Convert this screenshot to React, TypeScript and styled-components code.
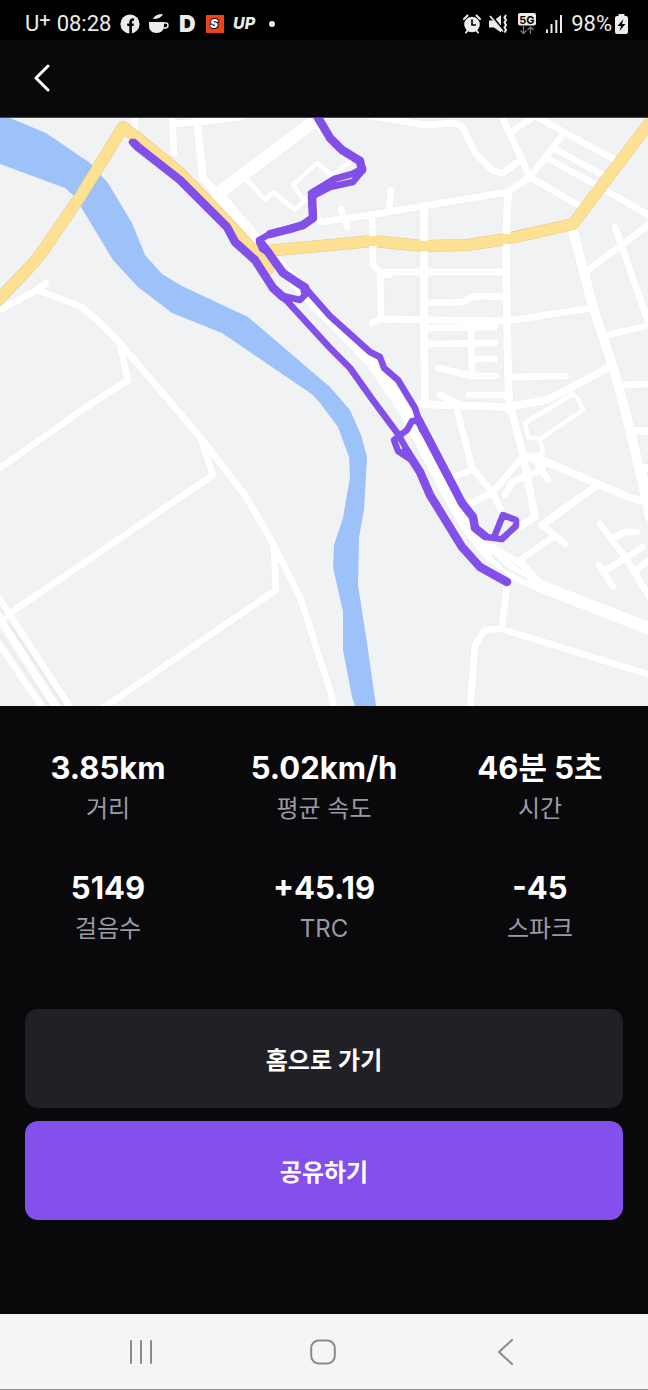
import React from "react";
import styled, { createGlobalStyle } from "styled-components";

const GlobalStyle = createGlobalStyle`
  * { box-sizing: border-box; }
  body { margin: 0; background: #09090b; }
`;

const Page = styled.div`
  display: flex;
  flex-direction: column;
  min-height: 100vh;
  background: #09090b;
  color: #fff;
  font-family: Inter, "Noto Sans CJK KR", sans-serif;
`;

const StatusBar = styled.div`
  display: flex;
  align-items: center;
  justify-content: space-between;
  height: 40px;
  padding: 8px 20px 0 25px;
  background: #000;
  color: #ececec;
  font-family: Roboto, sans-serif;
  font-size: 22px;
  line-height: 32px;
`;

const StatusGroup = styled.div<{ $gap: number }>`
  display: flex;
  align-items: center;
  gap: ${(p) => p.$gap}px;

  svg { display: block; flex: none; }
`;

const Carrier = styled.span`
  display: flex;
`;

const CarrierPlus = styled.span`
  font-size: 20px;
  line-height: 24px;
`;

const Header = styled.header`
  display: flex;
  align-items: center;
  height: 78px;
  padding: 0 22px;
  border-bottom: 1px solid #4b454c;
`;

const IconButton = styled.button`
  display: flex;
  align-items: center;
  justify-content: center;
  width: 40px;
  height: 40px;
  padding: 0;
  border: 0;
  background: none;
  cursor: pointer;
`;

const MapDrawing = styled.svg`
  display: block;
  width: 100%;
  height: auto;
  background: #f0f2f4;
`;

const Stats = styled.dl`
  display: grid;
  grid-template-columns: repeat(3, 1fr);
  row-gap: 38px;
  margin: 0;
  padding: 41px 0 60px;
`;

const Stat = styled.div`
  display: flex;
  flex-direction: column-reverse;
  align-items: center;
`;

const StatValue = styled.dd`
  margin: 0;
  font-size: 31px;
  font-weight: 700;
  line-height: 41px;
`;

const StatLabel = styled.dt`
  color: #9a9ba5;
  font-size: 24px;
  line-height: 41px;
`;

const Actions = styled.div`
  display: flex;
  flex-direction: column;
  gap: 13px;
  padding: 0 25px 94px;
`;

const ActionButton = styled.button<{ $primary?: boolean }>`
  height: 99px;
  border: 0;
  border-radius: 13px;
  background: ${(p) => (p.$primary ? "#8350ed" : "#212027")};
  color: #fff;
  font-family: inherit;
  font-size: 24px;
  font-weight: 600;
  cursor: pointer;
`;

const SystemNav = styled.nav`
  display: flex;
  align-items: center;
  justify-content: space-around;
  height: 76px;
  margin-top: auto;
  padding: 0 51px 0 50px;
  border-bottom: 1px solid #929292;
  background: #f5f5f5;
`;

const minorRoads = [
  "M320 222L370 215L423 206L508 192L530 177L565 132",
  "M533 115L615 160",
  "M502 117L530 177L578 205",
  "M510 133L533 117",
  "M370 116L425 125L453 123Q462 124 465 132L475 153L493 171L503 173L518 162",
  "M553 148L603 175",
  "M547 158L600 187L650 216",
  "M391 190L389 210",
  "M341 209L347 227",
  "M372 215L373 265L380 272L503 272",
  "M380 272L381 319M380 275L389 275",
  "M372 323L381 319L507 321L592 308",
  "M428 303L462 302L475 296L503 297",
  "M428 328L495 327M428 344L495 343",
  "M471 328L472 375M472 359L495 359",
  "M439 368L472 376L496 376",
  "M512 377L566 376",
  "M469 395L510 395M440 395L458 403",
  "M615 227L650 327",
  "M588 270L650 224",
  "M608 335L650 325",
  "M622 385L650 384",
  "M457 410L472 468L492 492L502 512",
  "M453 477L472 470",
  "M467 505L492 493L520 460",
  "M505 495L512 482L542 470L543 462",
  "M533 457L548 480",
  "M595 487L542 525L565 544",
  "M553 537L520 560L538 583",
  "M600 524L625 557L650 598",
  "M613 538L625 532L637 532",
  "M603 572L643 547M599 565L613 587",
  "M637 570L650 559",
  "M492 547L520 563L550 592",
  "M507 585L502 628L485 630L475 645L470 710",
  "M502 629L650 675",
  "M172 116L174 153M172 124L200 122L245 116",
  "M135 116L134 136",
  "M0 310L37 290L46 283",
  "M37 290L82 307Q100 322 120 343L177 410L200 437L245 495L275 547L300 597L330 690L335 710",
  "M120 345L128 380L82 410L0 468",
  "M200 437L213 475L3 618",
  "M274 545L276 590L100 710",
  "M-3 595L72 710",
  "M-5 638L44 710",
];

const thinRoads = [
  "M247 180L265 200L273 192L295 210L307 198",
  "M303 199L293 185L317 163L332 176L350 162L313 123",
  "M315 203L320 222",
  "M577 397L583 410L540 439L528 437L525 423L573 394",
  "M540 439L543 453L530 459",
];

const mediumRoads = [
  "M424 206L424 320L425 403",
  "M508 192L506 243L507 323L509 410",
  "M415 404L507 407L547 400L608 368",
  "M510 405L523 455L535 517L510 533",
  "M523 455L542 460L628 497L650 503",
  "M595 487L542 525",
  "M633 431L650 431M640 468L650 468",
  "M197 122L203 178L218 195",
  "M642 470L650 500",
  "M-2 616L58 710",
];

const wideRoads = [
  "M572 227L593 307L613 367L625 410L642 480L650 518",
];

const majorRoads = [
  "M220 192L313 122",
  "M218 195L267 253L320 308L372 362L403 407L432 466L468 528L488 553L520 577L553 591L650 629",
];

const highways = [
  "M-3 301L25 272Q40 257 55 233L80 197L123 127L135 136L180 173L227 222L253 250L262 256L268 269",
  "M265 251L320 246L373 241L423 246L467 245L507 239L573 224L650 122",
];

const route = [
  "M132 142L138 148L180 180L193 193L227 227L235 242L255 260L273 288L287 301L330 348L350 368L372 399L398 434L407 450L420 472L430 495L462 547L480 567L507 582",
  "M317 116L330 138L342 150L360 161L363 170L353 182L330 187L311 197L313 218L303 226L290 228L270 234L259 240L262 249L269 253L283 273L306 287L307 293L300 300L283 296",
  "M363 168L352 174L334 179L311 193",
  "M307 290L330 316L370 352L380 357L384 368L398 380L415 408L422 430L428 437L462 503L473 517L475 528L486 537L502 539L516 526L516 520L503 515L495 535",
  "M420 421L412 421L407 430L394 440L398 451L410 459",
];

const routeOverlap = [
  "M134 143L138 147L180 180L193 193L227 227L235 242L255 260L273 288L283 297",
  "M317 116L330 138L342 150L360 161L362 170M332 183L312 195L313 218L303 225L290 229L270 234",
  "M260 242L268 252L283 273L304 287L305 292",
  "M418 419L428 438L462 503L473 517L475 528L485 536",
  "M406 450L420 472L430 495L462 547L480 567L507 582",
];

const MapView = () => (
  <MapDrawing viewBox="0 118 648 588" role="img" aria-label="이동 경로 지도">
    <path
      d="M0 118H10L46 133L90 163L108 183L132 223L145 255L162 274L182 286L248 317L330 387L350 410L361 435L367 457L364 510L359 537L358 585L367 643L376 706H355L352 697L343 650V612L333 567L334 545L343 518L350 477L349 457L338 427L320 403L313 395L222 333L172 313L138 287L113 260L81 207L73 195L65 188L0 164Z"
      fill="#9dc2f9"
    />
    <g fill="none" strokeLinejoin="round" strokeLinecap="round">
      <g stroke="#e8eaec">
        <path d={minorRoads.join("")} strokeWidth={8} />
        <path d={thinRoads.join("")} strokeWidth={6} />
        <path d={mediumRoads.join("")} strokeWidth={9} />
        <path d={wideRoads.join("")} strokeWidth={11} />
        <path d={majorRoads.join("")} strokeWidth={14} />
      </g>
      <g stroke="#fff">
        <path d={minorRoads.join("")} strokeWidth={7} />
        <path d={thinRoads.join("")} strokeWidth={5} />
        <path d={mediumRoads.join("")} strokeWidth={8} />
        <path d={wideRoads.join("")} strokeWidth={10} />
        <path d={majorRoads.join("")} strokeWidth={13} />
      </g>
      <path d="M0 607L5 616M9 624L64 706M0 634L49 706" stroke="#e5e3e2" strokeWidth={1} />
      <path d="M492 555L505 568L526 579M411 438L452 518" stroke="#edeff1" strokeWidth={2} />
      <path d={highways.join("")} stroke="#e2c983" strokeWidth={12} />
      <path d={highways.join("")} stroke="#fde092" strokeWidth={11} />
      <path
        d="M373 234V236M373 246V248M424 239V241M424 251V253M507 232V234M507 244V246"
        stroke="#fff"
        strokeWidth={7}
        strokeLinecap="butt"
      />
      <path d={route.join("")} stroke="#8250e8" strokeWidth={6.5} />
      <path d={routeOverlap.join("")} stroke="#8250e8" strokeWidth={8.5} />
    </g>
  </MapDrawing>
);

const FacebookIcon = () => (
  <svg width="20" height="20" viewBox="0 0 20 20">
    <circle cx="10" cy="10" r="9.6" fill="#ececec" />
    <path d="M10.6 20V8.2Q10.6 5.3 14 5.6M7.2 10.8H13.7" fill="none" stroke="#000" strokeWidth="2.6" />
  </svg>
);

const CupIcon = () => (
  <svg width="20" height="20" viewBox="0 0 20 20">
    <path d="M0 8H15V11Q15 19 7.5 19Q0 19 0 11Z" fill="#ececec" />
    <path d="M14 9H17Q19 9 19 11.5Q19 14 16 14H14" fill="none" stroke="#ececec" strokeWidth="1.4" />
    <path d="M4 5Q6 0 14 0Q12 5 4 5Z" fill="#ececec" />
  </svg>
);

const LetterLogo = () => (
  <svg width="20" height="32" viewBox="0 0 20 32">
    <text x="1" y="24" fill="#ececec" fontFamily="Inter, sans-serif" fontSize="23" fontWeight="900">D</text>
  </svg>
);

const SquareLogo = () => (
  <svg width="18" height="18" viewBox="0 0 18 18">
    <rect width="18" height="18" fill="#ef431f" />
    <text x="4" y="13" fill="#fff" stroke="#16100e" strokeWidth="2" paintOrder="stroke" fontFamily="Inter, sans-serif" fontSize="12" fontStyle="italic" fontWeight="900">S</text>
  </svg>
);

const WordLogo = () => (
  <svg width="28" height="20" viewBox="0 0 28 20">
    <text x="1" y="15" fill="#ececec" fontFamily="Inter, sans-serif" fontSize="16" fontStyle="italic" fontWeight="800">UP</text>
  </svg>
);

const AlarmIcon = () => (
  <svg width="18" height="20" viewBox="0 0 18 20">
    <circle cx="9" cy="10.5" r="7.8" fill="#ececec" />
    <path d="M1 5L4.5 1.5M17 5L13.5 1.5M3 18.5L5 16M15 18.5L13 16" stroke="#ececec" strokeWidth="2" strokeLinecap="round" />
    <path d="M9 5.5V11H13" fill="none" stroke="#000" strokeWidth="1.6" />
  </svg>
);

const MuteIcon = () => (
  <svg width="20" height="20" viewBox="0 0 20 20">
    <path d="M0 6.5H5L12 1V18.5L5 13.5H0Z" fill="#ececec" />
    <path d="M2 1L15 17" stroke="#000" strokeWidth="2" />
    <path d="M1 2L14 17.5" stroke="#ececec" strokeWidth="1.7" />
    <path d="M17 1L15.500 3.5L17 6L15.500 8.5L17 11L15.500 13.5L17 16L15.500 18.5" fill="none" stroke="#ececec" strokeWidth="2" />
  </svg>
);

const NetworkIcon = () => (
  <svg width="20" height="22" viewBox="0 0 20 22">
    <rect x="1" width="18" height="12.5" rx="2" fill="#ececec" />
    <text x="10" y="10.5" textAnchor="middle" fill="#000" fontFamily="Inter, sans-serif" fontSize="11" fontWeight="700">5G</text>
    <path d="M6.5 13V20.5M3.5 17.5L6.5 20.5L9.5 17.5M13.5 21V14M10.5 17L13.5 14L16.5 17" fill="none" stroke="#777" strokeWidth="1.3" />
  </svg>
);

const SignalIcon = () => (
  <svg width="18" height="20" viewBox="0 0 18 20">
    <path d="M2 15.5V19M6.5 10V19M11.3 6V19M16 1V19" stroke="#ececec" strokeWidth="2" />
  </svg>
);

const BatteryIcon = () => (
  <svg width="13" height="20" viewBox="0 0 13 20">
    <path d="M3.5 0H9.5V2H11Q13 2 13 4V18Q13 20 11 20H2Q0 20 0 18V4Q0 2 2 2H3.5Z" fill="#ececec" />
    <path d="M8.5 5L2.5 12H6L4.5 17L10.5 10H7Z" fill="#000" />
  </svg>
);

const stats = [
  { label: "거리", value: "3.85km" },
  { label: "평균 속도", value: "5.02km/h" },
  { label: "시간", value: "46분 5초" },
  { label: "걸음수", value: "5149" },
  { label: "TRC", value: "+45.19" },
  { label: "스파크", value: "-45" },
];

export default function App() {
  return (
    <Page>
      <GlobalStyle />
      <StatusBar>
        <StatusGroup $gap={9}>
          <StatusGroup $gap={6}>
            <Carrier>
              U<CarrierPlus>+</CarrierPlus>
            </Carrier>
            <span>08:28</span>
          </StatusGroup>
          <FacebookIcon />
          <CupIcon />
          <StatusGroup $gap={8}>
            <LetterLogo />
            <SquareLogo />
            <WordLogo />
            <svg width="12" height="8" viewBox="0 0 12 8">
              <circle cx="4" cy="4" r="3" fill="#ececec" />
            </svg>
          </StatusGroup>
        </StatusGroup>
        <StatusGroup $gap={8}>
          <AlarmIcon />
          <MuteIcon />
          <NetworkIcon />
          <SignalIcon />
          <StatusGroup $gap={3}>
            <span>98%</span>
            <BatteryIcon />
          </StatusGroup>
        </StatusGroup>
      </StatusBar>

      <Header>
        <IconButton aria-label="뒤로">
          <svg width="20" height="30" viewBox="0 0 20 30" fill="none" stroke="#fff" strokeWidth="3" strokeLinecap="round" strokeLinejoin="round">
            <path d="M16 2L4 14L16 26" />
          </svg>
        </IconButton>
      </Header>

      <MapView />

      <Stats>
        {stats.map((s) => (
          <Stat key={s.label}>
            <StatLabel>{s.label}</StatLabel>
            <StatValue>{s.value}</StatValue>
          </Stat>
        ))}
      </Stats>

      <Actions>
        <ActionButton>홈으로 가기</ActionButton>
        <ActionButton $primary>공유하기</ActionButton>
      </Actions>

      <SystemNav>
        <IconButton aria-label="최근 앱">
          <svg width="26" height="26" viewBox="0 0 26 26" stroke="#8b8b8b" strokeWidth="2" strokeLinecap="round">
            <path d="M3 2V24M13 2V24M23 2V24" />
          </svg>
        </IconButton>
        <IconButton aria-label="홈">
          <svg width="26" height="26" viewBox="0 0 26 26" fill="none" stroke="#8b8b8b" strokeWidth="2">
            <rect x="1.2" y="1.5" width="23.6" height="23" rx="7.5" />
          </svg>
        </IconButton>
        <IconButton aria-label="뒤로 가기">
          <svg width="26" height="26" viewBox="0 0 26 26" fill="none" stroke="#8b8b8b" strokeWidth="2" strokeLinecap="round" strokeLinejoin="round">
            <path d="M19 1L6 13L19 25" />
          </svg>
        </IconButton>
      </SystemNav>
    </Page>
  );
}
